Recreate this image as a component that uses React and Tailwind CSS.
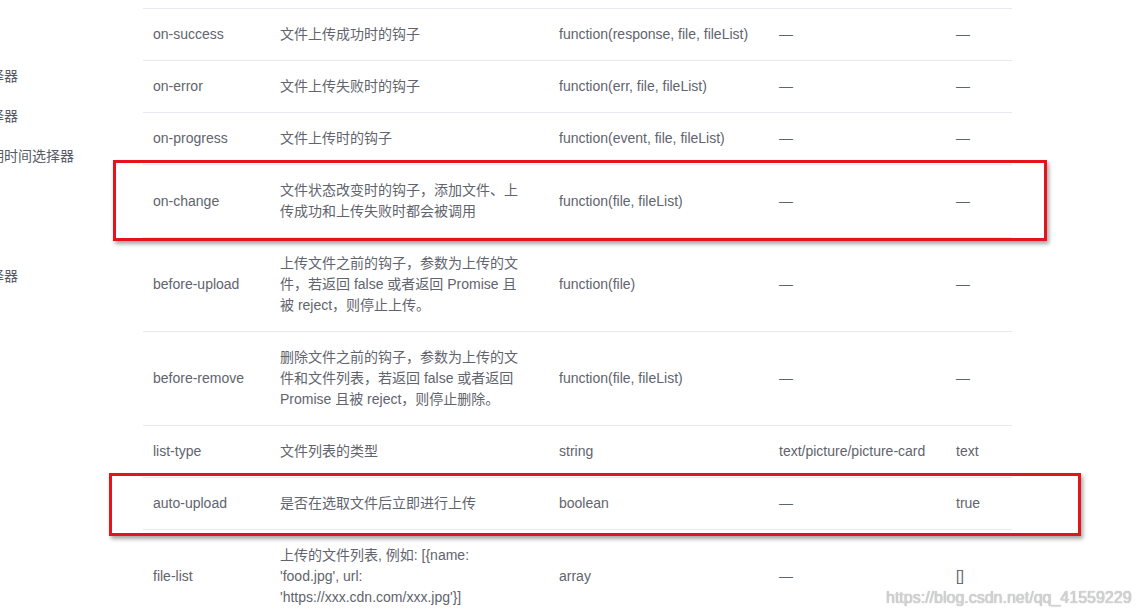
import React from 'react';

const rows = [
  { name: 'on-success', desc: ['文件上传成功时的钩子'], type: 'function(response, file, fileList)', opts: '—', def: '—' },
  { name: 'on-error', desc: ['文件上传失败时的钩子'], type: 'function(err, file, fileList)', opts: '—', def: '—' },
  { name: 'on-progress', desc: ['文件上传时的钩子'], type: 'function(event, file, fileList)', opts: '—', def: '—' },
  { name: 'on-change', desc: ['文件状态改变时的钩子，添加文件、上', '传成功和上传失败时都会被调用'], type: 'function(file, fileList)', opts: '—', def: '—' },
  { name: 'before-upload', desc: ['上传文件之前的钩子，参数为上传的文', '件，若返回 false 或者返回 Promise 且', '被 reject，则停止上传。'], type: 'function(file)', opts: '—', def: '—' },
  { name: 'before-remove', desc: ['删除文件之前的钩子，参数为上传的文', '件和文件列表，若返回 false 或者返回', 'Promise 且被 reject，则停止删除。'], type: 'function(file, fileList)', opts: '—', def: '—' },
  { name: 'list-type', desc: ['文件列表的类型'], type: 'string', opts: 'text/picture/picture-card', def: 'text' },
  { name: 'auto-upload', desc: ['是否在选取文件后立即进行上传'], type: 'boolean', opts: '—', def: 'true' },
  { name: 'file-list', desc: ['上传的文件列表, 例如: [{name:', "'food.jpg', url:", "'https://xxx.cdn.com/xxx.jpg'}]"], type: 'array', opts: '—', def: '[]' },
];

const sideItems = ['选择器', '选择器', '日期时间选择器', '', '', '选择器'];

const Cell = ({ children }) => (
  <div className="pl-[10px] py-[15px] self-center whitespace-nowrap">{children}</div>
);

const App = () => {
  return (
    <div
      className="relative w-[1139px] h-[615px] overflow-hidden bg-white flex text-[14px] leading-[21px]"
      style={{ fontFamily: '"Liberation Sans", Arial, "Noto Sans CJK SC", sans-serif' }}
    >
      <div className="w-[143px] shrink-0 overflow-hidden pt-[56px]">
        <ul className="-ml-[24px] text-[#555c66]">
          {sideItems.map((t, i) => (
            <li key={i} className="h-[40px] leading-[40px] whitespace-nowrap">{t}</li>
          ))}
        </ul>
      </div>

      <div className="pt-[8px] w-[869px] shrink-0 text-[#5f646d]">
        <div className="border-t border-[#e6e9ef]">
          {rows.map((r) => (
            <div
              key={r.name}
              className="grid grid-cols-[127px_279px_220px_177px_66px] border-b border-[#e6e9ef]"
            >
              <Cell>{r.name}</Cell>
              <Cell>
                {r.desc.map((l, i) => (
                  <div key={i}>{l}</div>
                ))}
              </Cell>
              <Cell>{r.type}</Cell>
              <Cell>{r.opts}</Cell>
              <Cell>{r.def}</Cell>
            </div>
          ))}
        </div>
      </div>

      {/* annotation boxes */}
      <div className="absolute left-[113px] top-[160px] w-[934px] h-[81px] border-[3px] border-[#e3141b] shadow-[2px_3px_4px_rgba(0,0,0,0.35)]" />
      <div className="absolute left-[109px] top-[473px] w-[972px] h-[63px] border-[3px] border-[#e3141b] shadow-[2px_3px_4px_rgba(0,0,0,0.35)]" />

      <div className="absolute left-[886px] top-[587px] text-[16px] text-[#d4d4d4] [text-shadow:0_0_1px_#999]">
        https://blog.csdn.net/qq_41559229
      </div>
    </div>
  );
};

export default App;
